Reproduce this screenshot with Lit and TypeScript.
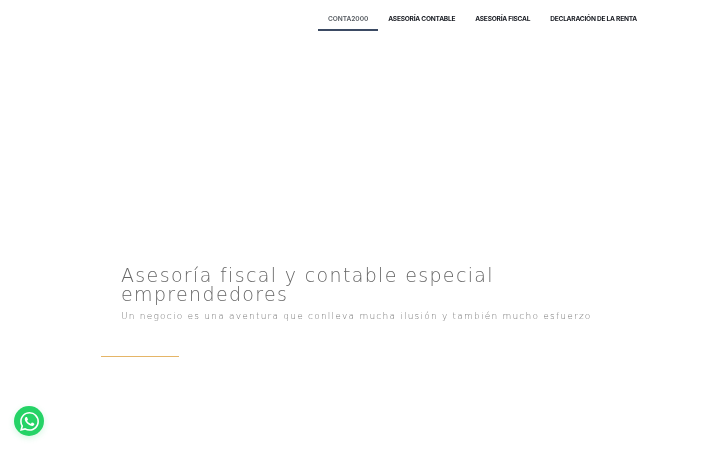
import { LitElement, html, css } from "lit";
import { customElement } from "lit/decorators.js";

@customElement("app-root")
export class AppRoot extends LitElement {
  static styles = css`
    :host { display: block; position: relative; width: 720px; height: 450px; background: #fff; overflow: hidden; font-family: "DejaVu Sans", "Liberation Sans", sans-serif; }
    nav { display: flex; justify-content: flex-end; padding: 8px 73px 0 0; height: 31px; box-sizing: border-box; will-change: opacity; }
    nav a { display: block; padding: 0 10px; height: 23px; box-sizing: border-box; line-height: 23px; font-family: "Inter", "Liberation Sans", sans-serif; font-size: 6.6px; letter-spacing: -0.24px; font-weight: 700; color: #15181f; white-space: nowrap; }
    nav a.active { color: #54595f; font-weight: 600; letter-spacing: -0.05px; border-bottom: 2px solid #3b4a63; }
    .hero { padding: 235px 0 0 101px; will-change: opacity; }
    h1 { margin: 0 0 0 20px; width: 400px; font-weight: 200; font-size: 19px; line-height: 19px; letter-spacing: 1.35px; color: #666; }
    p { margin: 5px 0 0 20px; font-weight: 200; font-size: 9px; line-height: 14px; letter-spacing: 1.22px; color: #777; white-space: nowrap; }
    .rule { width: 78px; height: 1px; margin-top: 33px; background: #e5b567; }
    .wa { position: absolute; left: 14px; top: 406px; width: 30px; height: 30px; border-radius: 50%; background: #25d366; display: flex; align-items: center; justify-content: center; box-shadow: 0 2px 6px rgba(37, 211, 102, 0.2); }
    .wa svg { width: 19px; height: 19px; fill: #fff; }
  `;
  render() {
    return html`
      <nav>
        <a class="active">CONTA2000</a>
        <a>ASESORÍA CONTABLE</a>
        <a>ASESORÍA FISCAL</a>
        <a>DECLARACIÓN DE LA RENTA</a>
      </nav>
      <div class="hero">
        <h1>Asesoría fiscal y contable especial emprendedores</h1>
        <p>Un negocio es una aventura que conlleva mucha ilusión y también mucho esfuerzo</p>
        <div class="rule"></div>
      </div>
      <div class="wa">
        <svg viewBox="0 0 24 24"><path d="M17.47 14.38c-.3-.15-1.76-.87-2.03-.97-.27-.1-.47-.15-.67.15-.2.3-.77.97-.94 1.16-.17.2-.35.22-.64.07-.3-.15-1.26-.46-2.39-1.47-.88-.79-1.48-1.76-1.65-2.06-.17-.3-.02-.46.13-.6.13-.14.3-.35.45-.52.15-.17.2-.3.3-.5.1-.2.05-.37-.03-.52-.07-.15-.67-1.61-.91-2.2-.24-.58-.49-.5-.67-.51h-.57c-.2 0-.52.07-.79.37-.27.3-1.04 1.02-1.04 2.48s1.07 2.88 1.21 3.07c.15.2 2.1 3.2 5.08 4.49.71.3 1.26.49 1.69.62.71.23 1.36.2 1.87.12.57-.09 1.76-.72 2.01-1.41.25-.7.25-1.29.17-1.41-.07-.13-.27-.2-.57-.35zM12.05 21.79h-.01a9.87 9.87 0 0 1-5.03-1.38l-.36-.21-3.74.98 1-3.65-.24-.37a9.86 9.86 0 0 1-1.51-5.26c0-5.45 4.44-9.88 9.89-9.88 2.64 0 5.12 1.03 6.99 2.9a9.82 9.82 0 0 1 2.89 6.99c0 5.45-4.44 9.88-9.88 9.88zM20.46 3.49A11.82 11.82 0 0 0 12.05 0C5.5 0 .16 5.34.16 11.89c0 2.1.55 4.14 1.59 5.95L.06 24l6.3-1.65a11.88 11.88 0 0 0 5.68 1.45h.01c6.55 0 11.89-5.34 11.89-11.89 0-3.18-1.24-6.16-3.48-8.42z"/></svg>
      </div>
    `;
  }
}
